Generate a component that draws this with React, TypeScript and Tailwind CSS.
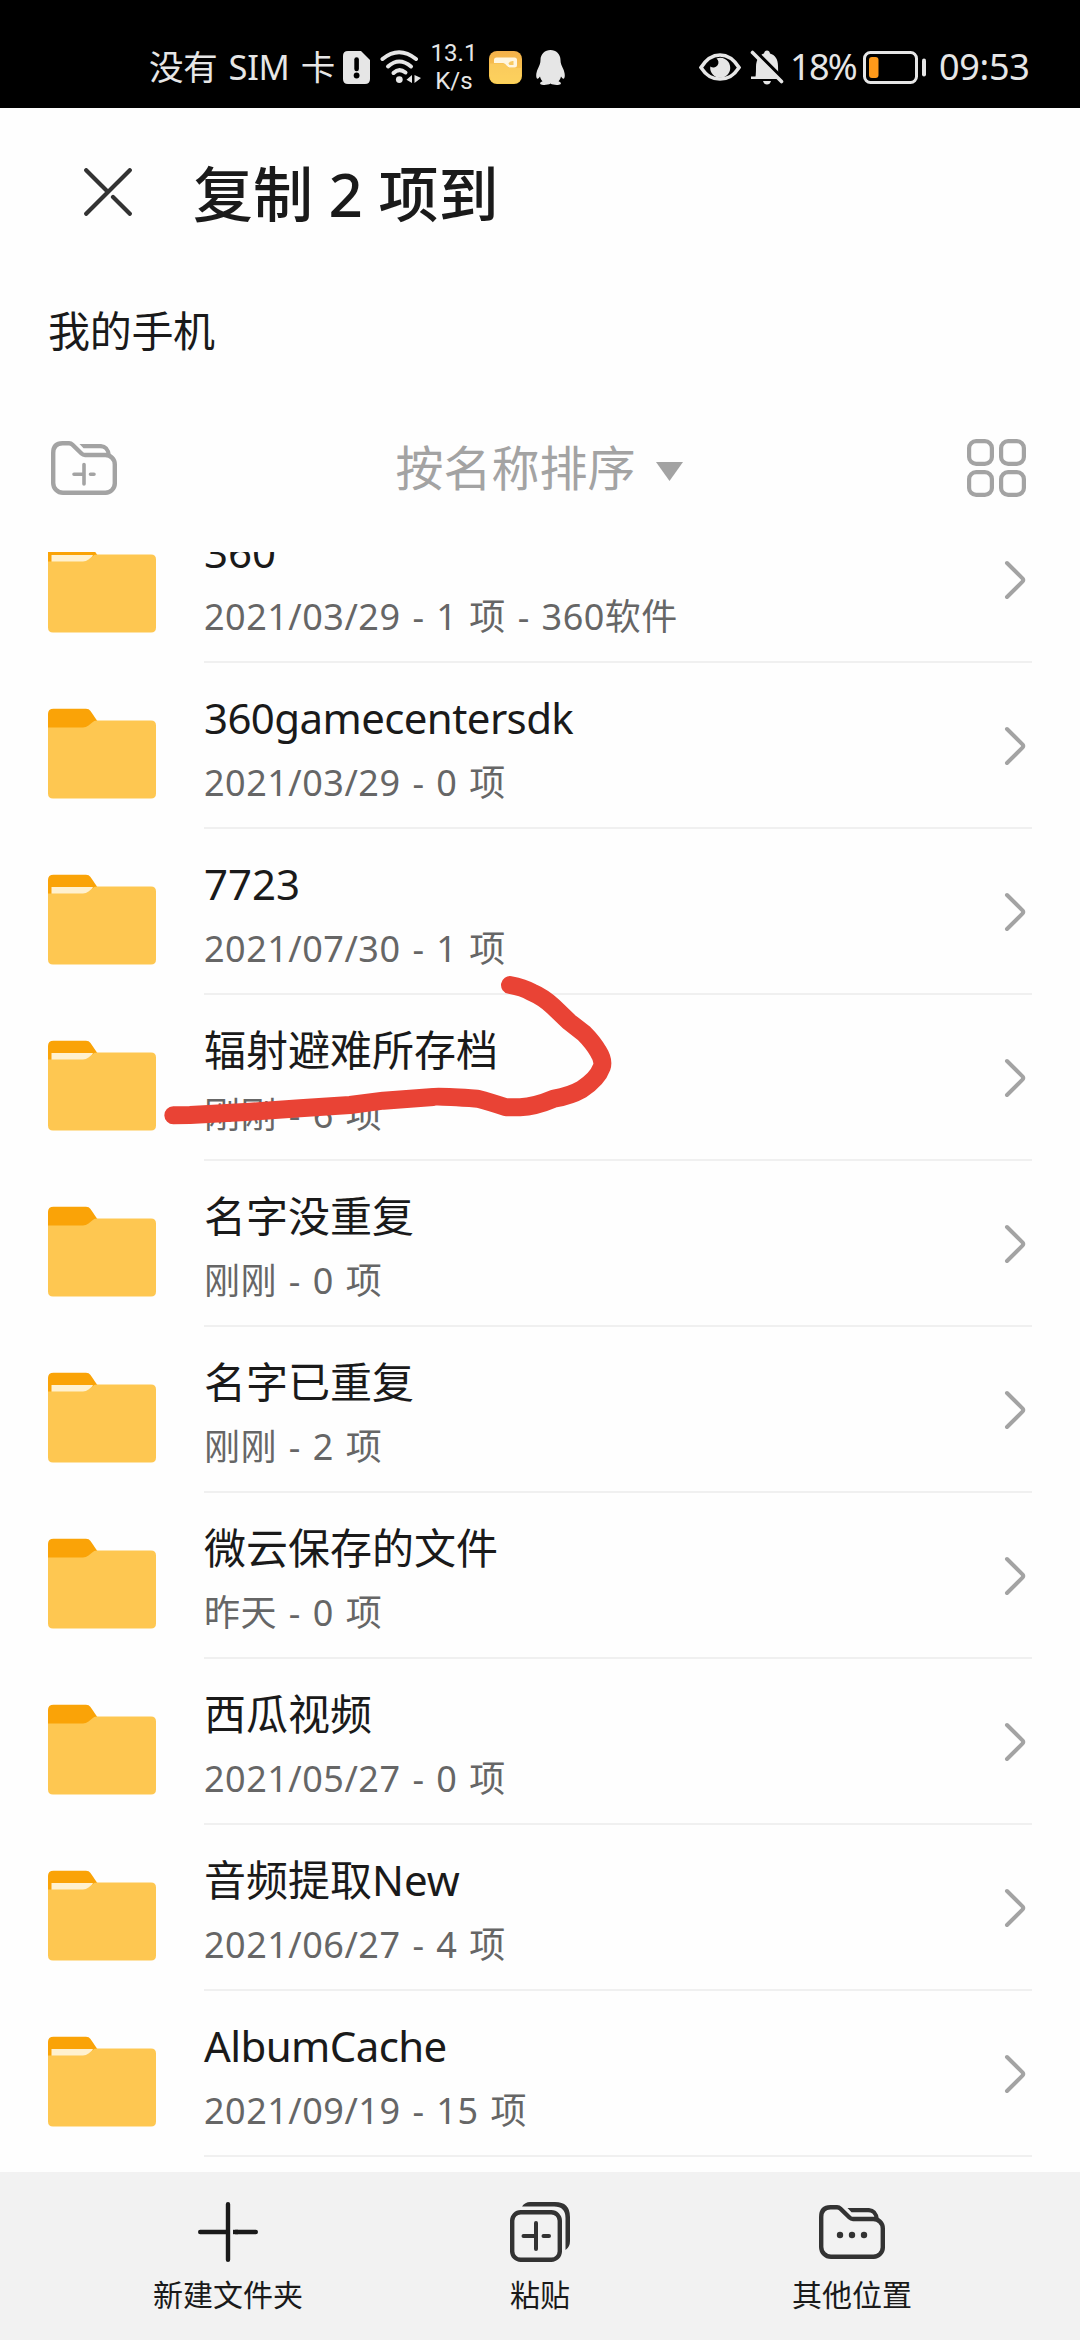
import React from "react";

type Entry = { name: string; meta: string; filled: boolean; latin?: boolean };

const entries: Entry[] = [
  { name: "360", meta: "2021/03/29 - 1 项 - 360软件", filled: true },
  { name: "360gamecentersdk", meta: "2021/03/29 - 0 项", filled: false, latin: true },
  { name: "7723", meta: "2021/07/30 - 1 项", filled: true },
  { name: "辐射避难所存档", meta: "刚刚 - 6 项", filled: true },
  { name: "名字没重复", meta: "刚刚 - 0 项", filled: false },
  { name: "名字已重复", meta: "刚刚 - 2 项", filled: true },
  { name: "微云保存的文件", meta: "昨天 - 0 项", filled: false },
  { name: "西瓜视频", meta: "2021/05/27 - 0 项", filled: false },
  { name: "音频提取New", meta: "2021/06/27 - 4 项", filled: true },
  { name: "AlbumCache", meta: "2021/09/19 - 15 项", filled: true, latin: true },
];

function StatusBar() {
  return (
    <div className="flex h-[108px] items-center bg-black pt-[26px] pr-[50px] pl-[149px] text-[#e6e6e6]">
      <span className="w-[193px] text-[34.5px] leading-[48px] tracking-[-0.3px] whitespace-nowrap [word-spacing:2.5px]">没有 SIM 卡</span>
      <svg className="ml-px h-[33px] w-[27px] shrink-0" viewBox="0 0 27 33">
        <path fill="#e6e6e6" d="M5 0H18L27 9V28Q27 33 22 33H5Q0 33 0 28V5Q0 0 5 0Z" />
        <path d="M13.6 8.5V18" stroke="#000" strokeWidth="4.6" strokeLinecap="round" />
        <circle cx="13.6" cy="24.5" r="2.9" fill="#000" />
      </svg>
      <svg className="ml-[10px] h-[34px] w-[42px] shrink-0" viewBox="0 0 42 34" fill="none" stroke="#e6e6e6" strokeWidth="4" strokeLinecap="round">
        <path d="M2.5 9Q19 -4.5 36 9" />
        <path d="M8 16.500Q19 6.500 31 16.500" />
        <path d="M13.500 23Q19 17.500 25.500 22.500" />
        <circle cx="19.300" cy="29.600" r="3.400" fill="#e6e6e6" stroke="none" />
        <path d="M32 25V33L26.500 29.800ZM34.500 25L41 28L34.500 33Z" fill="#e6e6e6" stroke="none" />
      </svg>
      <div className="ml-[9px] flex w-[46px] flex-col items-center font-['Roboto'] text-[24px] leading-[28px]">
        <span>13.1</span>
        <span>K/s</span>
      </div>
      <svg className="ml-[12px] h-[33px] w-[33px] shrink-0" viewBox="0 0 33 33">
        <defs>
          <linearGradient id="files" x1="0" y1="0" x2="0" y2="1">
            <stop offset="0" stopColor="#f3b04a" />
            <stop offset="1" stopColor="#fbcf50" />
          </linearGradient>
        </defs>
        <rect width="33" height="33" rx="8" fill="url(#files)" />
        <path d="M5 12V9Q5 6.500 7.500 6.500H25.500Q28 6.500 28 9V14Q28 16.500 25.500 16.500H21Q19 16.500 17.500 14.500Q16 12 14 12Z" fill="#fff6df" />
        <path d="M19.500 12.500Q20.500 9.500 24.500 10V14H20.500Z" fill="#f8c960" />
        <path d="M1 12.500H14Q16 12.500 17.500 15Q19 17 21 17H32V25Q32 32 25 32H8Q1 32 1 25Z" fill="#fdd468" opacity="0.6" />
      </svg>
      <svg className="ml-[14px] h-[35px] w-[29px] shrink-0" viewBox="0 0 29 35" fill="#e6e6e6">
        <path d="M14.500 0C20 0 24.500 4 24.500 10C24.500 13 25.500 15.500 27 18.500C29 22.500 29.300 27 28 28.500C27 29.200 26 28 25 26.500C24.500 28.500 23.700 30 22.500 31.200C24.500 32 25.500 33 24.500 34.200C23 35.300 17 35.200 14.500 33.500C12 35.200 6 35.300 4.500 34.200C3.500 33 4.500 32 6.500 31.200C5.300 30 4.500 28.500 4 26.500C3 28 2 29.200 1 28.500C-.3 27 0 22.500 2 18.500C3.500 15.500 4.500 13 4.500 10C4.500 4 9 0 14.500 0Z" />
      </svg>
      <div className="ml-auto flex items-center">
        <svg className="h-[29px] w-[42px]" viewBox="0 0 42 29">
          <path d="M2 14.500C8 5 14 2 21 2S34 5 40 14.500C34 24 28 26 21 26S8 24 2 14.500Z" fill="none" stroke="#e6e6e6" strokeWidth="3.600" />
          <path d="M17.500 5.500A10 10 0 1 1 11.300 13.500A5 5 0 1 0 17.500 5.500Z" fill="#e6e6e6" />
        </svg>
        <svg className="ml-[9px] h-[35px] w-[34px]" viewBox="0 0 34 35">
          <path d="M5 28Q6 27 6 17C6 9 10 4.500 14 3.500Q14.500 .5 17 .5T20 3.500C25 5 28 9 28 16Q28 27 30 28Z" fill="#e6e6e6" />
          <path d="M13 31H21Q20 34.500 17 34.500T13 31ZM1 26.500H30V29H1Z" fill="#e6e6e6" />
          <path d="M3.500 -.5L34 30" stroke="#000" strokeWidth="4" />
          <path d="M2.500 2.500L31.500 31.500" stroke="#e6e6e6" strokeWidth="3.600" strokeLinecap="round" />
        </svg>
        <span className="ml-[6px] w-[69px] text-[36px] leading-[48px] tracking-[-1.7px]">18%</span>
        <svg className="ml-[4px] h-[33px] w-[64px]" viewBox="0 0 64 33">
          <rect x="1.500" y="1.500" width="52" height="30" rx="6" fill="none" stroke="#e6e6e6" strokeWidth="3" />
          <rect x="6" y="6" width="9.500" height="21" rx="3" fill="#ff9a1a" />
          <rect x="59" y="7.500" width="4" height="18" rx="2" fill="#e6e6e6" />
        </svg>
        <span className="ml-[12px] w-[91px] text-[36px] leading-[48px] tracking-[-0.3px]">09:53</span>
      </div>
    </div>
  );
}

/* Outlined folder shared by the toolbar and the bottom bar, 66 x 54. */
function OutlineFolder({ className, children }: { className: string; children: React.ReactNode }) {
  return (
    <svg className={className} viewBox="0 0 66 54" fill="none" stroke="currentColor" strokeWidth="4.400">
      <path d="M11.500 2.200H18Q20 2.200 21.500 3.700L30.500 12.500Q32 14 34 14H54A9.500 9.500 0 0 1 63.800 23.500V42A9.500 9.500 0 0 1 54 51.800H12A9.800 9.800 0 0 1 2.200 42V12Q2.200 2.200 11.500 2.200Z" />
      <path d="M32.500 7.200L28.500 3H50Q58.500 3.500 60 14.500L55.500 12.500Q54.500 7.200 49 7.200Z" fill="currentColor" stroke="none" />
      {children}
    </svg>
  );
}

function FolderIcon({ filled }: { filled: boolean }) {
  return (
    <svg className="mt-[45px] h-[91px] w-[108px] shrink-0" viewBox="0 0 108 91">
      <path d="M0 20V6Q0 .8 5.500 .8H38Q41 .8 42.500 3L50 14V20Z" fill="#faa307" />
      {filled && <path d="M3.500 13H45L40 22H3.500Z" fill="#fff1cf" />}
      <path d="M0 19.500H35Q38 19.500 40.500 17.500L44.500 14.200Q46 12.500 48.500 12.500H103Q108 12.500 108 17.500V85.500Q108 90.500 103 90.500H5Q0 90.500 0 85.500Z" fill="#fec751" />
    </svg>
  );
}

function Row({ entry }: { entry: Entry }) {
  return (
    <li className="flex h-[166px] pl-[48px]">
      <FolderIcon filled={entry.filled} />
      <div className="mr-[48px] ml-[48px] flex flex-1 border-b-2 border-[#f0f0f0]">
        <div className="flex-1 pt-[27px]">
          <div className={entry.latin ? "text-[42px] leading-[56px] tracking-[-0.6px]" : "text-[42px] leading-[56px]"}>{entry.name}</div>
          <div className="mt-[13px] text-[36px] leading-[48px] tracking-[0.5px] text-[#666] [word-spacing:2px]">{entry.meta}</div>
        </div>
        <svg className="mt-[63px] mr-[6px] h-[40px] w-[22px]" viewBox="0 0 22 40" fill="none" stroke="#a3a3a3" strokeWidth="4" strokeLinecap="round" strokeLinejoin="round">
          <path d="M3 3L18.500 18.300Q20 20 18.500 21.700L3 37" />
        </svg>
      </div>
    </li>
  );
}

export default function App() {
  return (
    <div className="flex h-[2340px] w-[1080px] flex-col overflow-hidden bg-[#fefefe] font-['Noto_Sans','Noto_Sans_CJK_SC',sans-serif] text-[#1a1a1a]">
      <StatusBar />
      <header className="flex h-[168px] items-center pl-[84px]">
        <svg className="h-[48px] w-[48px]" viewBox="0 0 48 48" fill="none" stroke="#333" strokeWidth="4.200" strokeLinecap="round">
          <path d="M2.200 45.800L45.800 2.200M2.200 2.200L23 23M29 29L45.800 45.800" />
        </svg>
        <h1 className="mt-[4px] ml-[61px] text-[60px] leading-[80px] font-medium">复制 2 项到</h1>
      </header>
      <p className="mt-[27px] pl-[48px] text-[42px] leading-[56px] tracking-[-0.3px]">我的手机</p>
      <div className="mt-[59px] mb-[34px] flex h-[100px] shrink-0 items-center justify-between pr-[54px] pl-[51px] text-[#a3a3a3]">
        <OutlineFolder className="h-[54px] w-[66px]">
          <path d="M33 23.500V43M23 33.200H33M39.500 33.200H43" strokeWidth="3.600" strokeLinecap="round" />
        </OutlineFolder>
        <div className="-ml-[6px] flex items-center">
          <span className="text-[48px] leading-[64px]">按名称排序</span>
          <svg className="mt-[6px] ml-[20px] h-[19px] w-[27px]" viewBox="0 0 27 19">
            <path d="M0 0H27L13.500 19Z" fill="#a3a3a3" />
          </svg>
        </div>
        <svg className="h-[58px] w-[59px]" viewBox="0 0 59 58" fill="none" stroke="currentColor" strokeWidth="4.200">
          <rect x="2.100" y="2.100" width="22.800" height="22.800" rx="7" />
          <rect x="34.100" y="2.100" width="22.800" height="22.800" rx="7" />
          <rect x="2.100" y="33.100" width="22.800" height="22.800" rx="7" />
          <rect x="34.100" y="33.100" width="22.800" height="22.800" rx="7" />
        </svg>
      </div>
      <main className="relative h-[1620px] shrink-0 overflow-hidden">
        <ul className="-mt-[55px]">
          {entries.map((e) => (
            <Row key={e.name} entry={e} />
          ))}
        </ul>
        <svg className="absolute top-[408px] left-[150px] h-[200px] w-[500px]" viewBox="0 0 1500 600" fill="none" stroke="#e94335" strokeWidth="54" strokeLinecap="round" strokeLinejoin="round">
          <path d="M1080 75Q1120 82 1145 97Q1180 112 1210 140L1258 186L1302 220Q1330 248 1345 275Q1362 302 1355 322Q1342 358 1295 388Q1262 407 1212 416Q1155 440 1110 442H1068Q1020 426 982 416Q860 408 850 411L700 422L600 435L450 445L300 455L120 465L70 466" />
        </svg>
      </main>
      <nav className="flex h-[168px] shrink-0 justify-center bg-[#f2f2f2] pt-[30px] text-[30px] leading-[40px]">
        <div className="flex w-[312px] flex-col items-center gap-[13px]">
          <svg className="h-[60px] w-[60px]" viewBox="0 0 60 60" fill="none" stroke="#1a1a1a" strokeWidth="4.400" strokeLinecap="round">
            <path d="M30 2.200V57.800M2.200 30H30M37.500 30H57.800" />
            <path d="M35 30H40" strokeLinecap="butt" />
          </svg>
          <span>新建文件夹</span>
        </div>
        <div className="flex w-[312px] flex-col items-center gap-[13px]">
          <svg className="h-[60px] w-[60px]" viewBox="0 0 60 60" fill="none" stroke="#333" strokeWidth="4.400" strokeLinecap="round">
            <rect x="2.200" y="10.200" width="47.600" height="47.600" rx="8.500" />
            <path d="M26 21V47M13.500 34H26M33.500 34H39" strokeWidth="4" />
            <path d="M12 4.500Q15 0 20 0H45Q60 0 60 15V39Q60 45 55.500 48V16Q55.500 4.500 44 4.500Z" fill="#333" stroke="none" />
          </svg>
          <span>粘贴</span>
        </div>
        <div className="flex w-[312px] flex-col items-center gap-[13px]">
          <OutlineFolder className="my-[3px] h-[54px] w-[66px] text-[#333]">
            <g fill="currentColor" stroke="none">
              <circle cx="21" cy="30" r="3.200" />
              <circle cx="33" cy="30" r="3.200" />
              <circle cx="45" cy="30" r="3.200" />
            </g>
          </OutlineFolder>
          <span>其他位置</span>
        </div>
      </nav>
    </div>
  );
}
